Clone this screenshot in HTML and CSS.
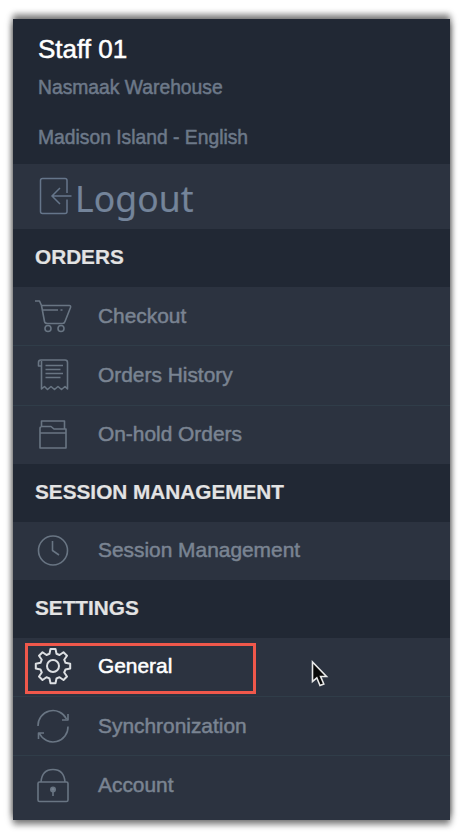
FILE: index.html
```html
<!DOCTYPE html>
<html lang="en">
<head>
<meta charset="utf-8">
<title>Menu</title>
<link rel="stylesheet" href="styles.css">
</head>
<body>
<nav class="panel">
  <header class="profile">
    <h1 class="name">Staff 01</h1>
    <p class="place">Nasmaak Warehouse</p>
    <p class="place">Madison Island - English</p>
  </header>
  <a class="logout">
    <svg class="logout-icon" width="35" height="38" viewBox="0 0 35 38"><path d="M28 16V3.500Q28 1.500 26 1.500H3.500Q1.500 1.500 1.500 3.500V34.500Q1.500 36.500 3.500 36.500H26Q28 36.500 28 34.500V22.500M32.500 19H13M21 11L13 19L21 27"/></svg>
    <span>Logout</span>
  </a>
  <h2 class="section">ORDERS</h2>
  <ul class="items">
    <li class="item">
      <svg class="icon" viewBox="0 0 38 38"><path d="M1 4H5.500L7.500 8.500H35.500Q37 8.500 36.500 10.500L31 24.500Q30.500 26.500 28.500 26.500H13.500Q11 26.500 10.500 24.500L7.500 8.500M8.500 13H24M26.500 13H28.500"/><circle cx="14" cy="31.500" r="3"/><circle cx="27" cy="31.500" r="3"/></svg>
      <span>Checkout</span>
    </li>
    <li class="item">
      <svg class="icon" viewBox="0 0 38 38"><path d="M7.500 10H4.500V6.500Q4.500 4 7 4H31Q33.500 4 33.500 6.500V33L31 30.500L27.500 33.500L24 30.500L20.500 33.500L17 30.500L13.500 33.500L10.500 30.500L7.500 33V5M11.500 9.500H29M11.500 13.500H26.500M11.500 17.500H29M11.500 21.500H26.500"/></svg>
      <span>Orders History</span>
    </li>
    <li class="item">
      <svg class="icon" viewBox="0 0 38 38"><path d="M7.500 12V6H30.500V14H20L17 11.500H8Q6 11.500 6 13.500V33H32V14H30.500M6 18H32"/></svg>
      <span>On-hold Orders</span>
    </li>
  </ul>
  <h2 class="section">SESSION MANAGEMENT</h2>
  <ul class="items">
    <li class="item">
      <svg class="icon" viewBox="0 0 38 38"><circle cx="19" cy="19.500" r="14.500"/><path d="M18.500 10V19.500L25 24"/></svg>
      <span>Session Management</span>
    </li>
  </ul>
  <h2 class="section">SETTINGS</h2>
  <ul class="items">
    <li class="item active">
      <svg class="icon" viewBox="0 0 38 38"><path d="M16.500 2H21.500L22.500 6.800L25.500 8L29.500 5.200L33 8.700L30.200 12.700L31.500 15.800L36.200 16.700V21.500L31.500 22.500L30.200 25.500L33 29.500L29.500 33L25.500 30.200L22.500 31.500L21.500 36.200H16.500L15.500 31.500L12.500 30.200L8.500 33L5 29.500L7.800 25.500L6.500 22.500L1.800 21.500V16.700L6.500 15.800L7.800 12.700L5 8.700L8.500 5.200L12.500 8L15.500 6.800Z"/><circle cx="19" cy="19" r="6"/></svg>
      <span>General</span>
      <i class="highlight"></i>
      <svg class="cursor" width="18" height="28" viewBox="0 0 18 28"><path d="M1.500 2V21.500L5.800 17.800L9 25.500L12.800 24L9.600 16.500H15.500Z"/></svg>
    </li>
    <li class="item">
      <svg class="icon" viewBox="0 0 38 38"><path d="M4 19A15 15 0 0 1 32.500 12M34 7V13H28M34 19.500A15 15 0 0 1 5.500 26.500M4.500 32V26H10"/></svg>
      <span>Synchronization</span>
    </li>
    <li class="item">
      <svg class="icon" viewBox="0 0 38 38"><rect x="4" y="16" width="30" height="19.500" rx="1.500"/><path d="M7 16Q8 3.500 19 3.500T31 16"/><circle class="solid" cx="19" cy="23.500" r="2.200"/><path d="M19 24V30"/></svg>
      <span>Account</span>
    </li>
  </ul>
</nav>
</body>
</html>
```
FILE: styles.css
```css
* { box-sizing: border-box; }

body {
  margin: 0;
  padding: 19px 15px 18px 13px;
  background: #fff;
  font-family: "Liberation Sans", Arial, sans-serif;
}

.panel {
  height: 801px;
  background: #2c3340;
  color: #7a8492;
  box-shadow: 0 0 8px rgba(0, 0, 0, .4), 0 -5px 6px rgba(0, 0, 0, .38), 0 5px 6px rgba(0, 0, 0, .38);
  -webkit-text-stroke: .5px currentColor;
}

h1, h2, p, ul { margin: 0; padding: 0; }

.profile {
  height: 145px;
  padding: 14px 25px 0;
  background: #212834;
  color: #6d7989;
}

.name {
  height: 33px;
  font-size: 26px;
  line-height: 32px;
  font-weight: 400;
  color: #fff;
}

.place {
  height: 50px;
  font-size: 19.3px;
  line-height: 44px;
}

.logout {
  display: flex;
  height: 65px;
  padding: 13px 0 0 26px;
  color: #74849a;
  font-family: "Noto Sans", sans-serif;
  font-size: 35.5px;
  line-height: 43px;
  letter-spacing: .1px;
  -webkit-text-stroke: .2px currentColor;
}

.logout-icon {
  flex: none;
  margin-right: 1px;
  fill: none;
  stroke: #65758a;
  stroke-width: 1.5;
}

.section {
  height: 58px;
  padding-left: 22px;
  background: #212834;
  color: #e3e3e3;
  font-size: 20.75px;
  line-height: 56px;
  -webkit-text-stroke: .2px currentColor;
}

.items { list-style: none; }

.item {
  position: relative;
  display: flex;
  align-items: center;
  gap: 26px;
  height: 59.3px;
  padding: 0 0 1px 21px;
  border-bottom: 1px solid #303d49;
  font-size: 20.9px;
  line-height: 24px;
}

.item:last-child {
  height: 58px;
  border-bottom: 0;
}

.icon {
  flex: none;
  width: 38px;
  height: 38px;
  fill: none;
  stroke: #697583;
  stroke-width: 1.6;
  stroke-linejoin: round;
}

.icon .solid { fill: #76818f; }

.active { color: #fff; }

.active .icon {
  stroke: #dde0e3;
  stroke-width: 2;
}

.highlight {
  position: absolute;
  left: 12px;
  top: 5px;
  width: 231px;
  height: 51px;
  border: 3px solid #f0584b;
}

.cursor {
  position: absolute;
  left: 298px;
  top: 22px;
  fill: #080808;
  stroke: #e8e8e8;
  stroke-width: 1.6;
}
```
